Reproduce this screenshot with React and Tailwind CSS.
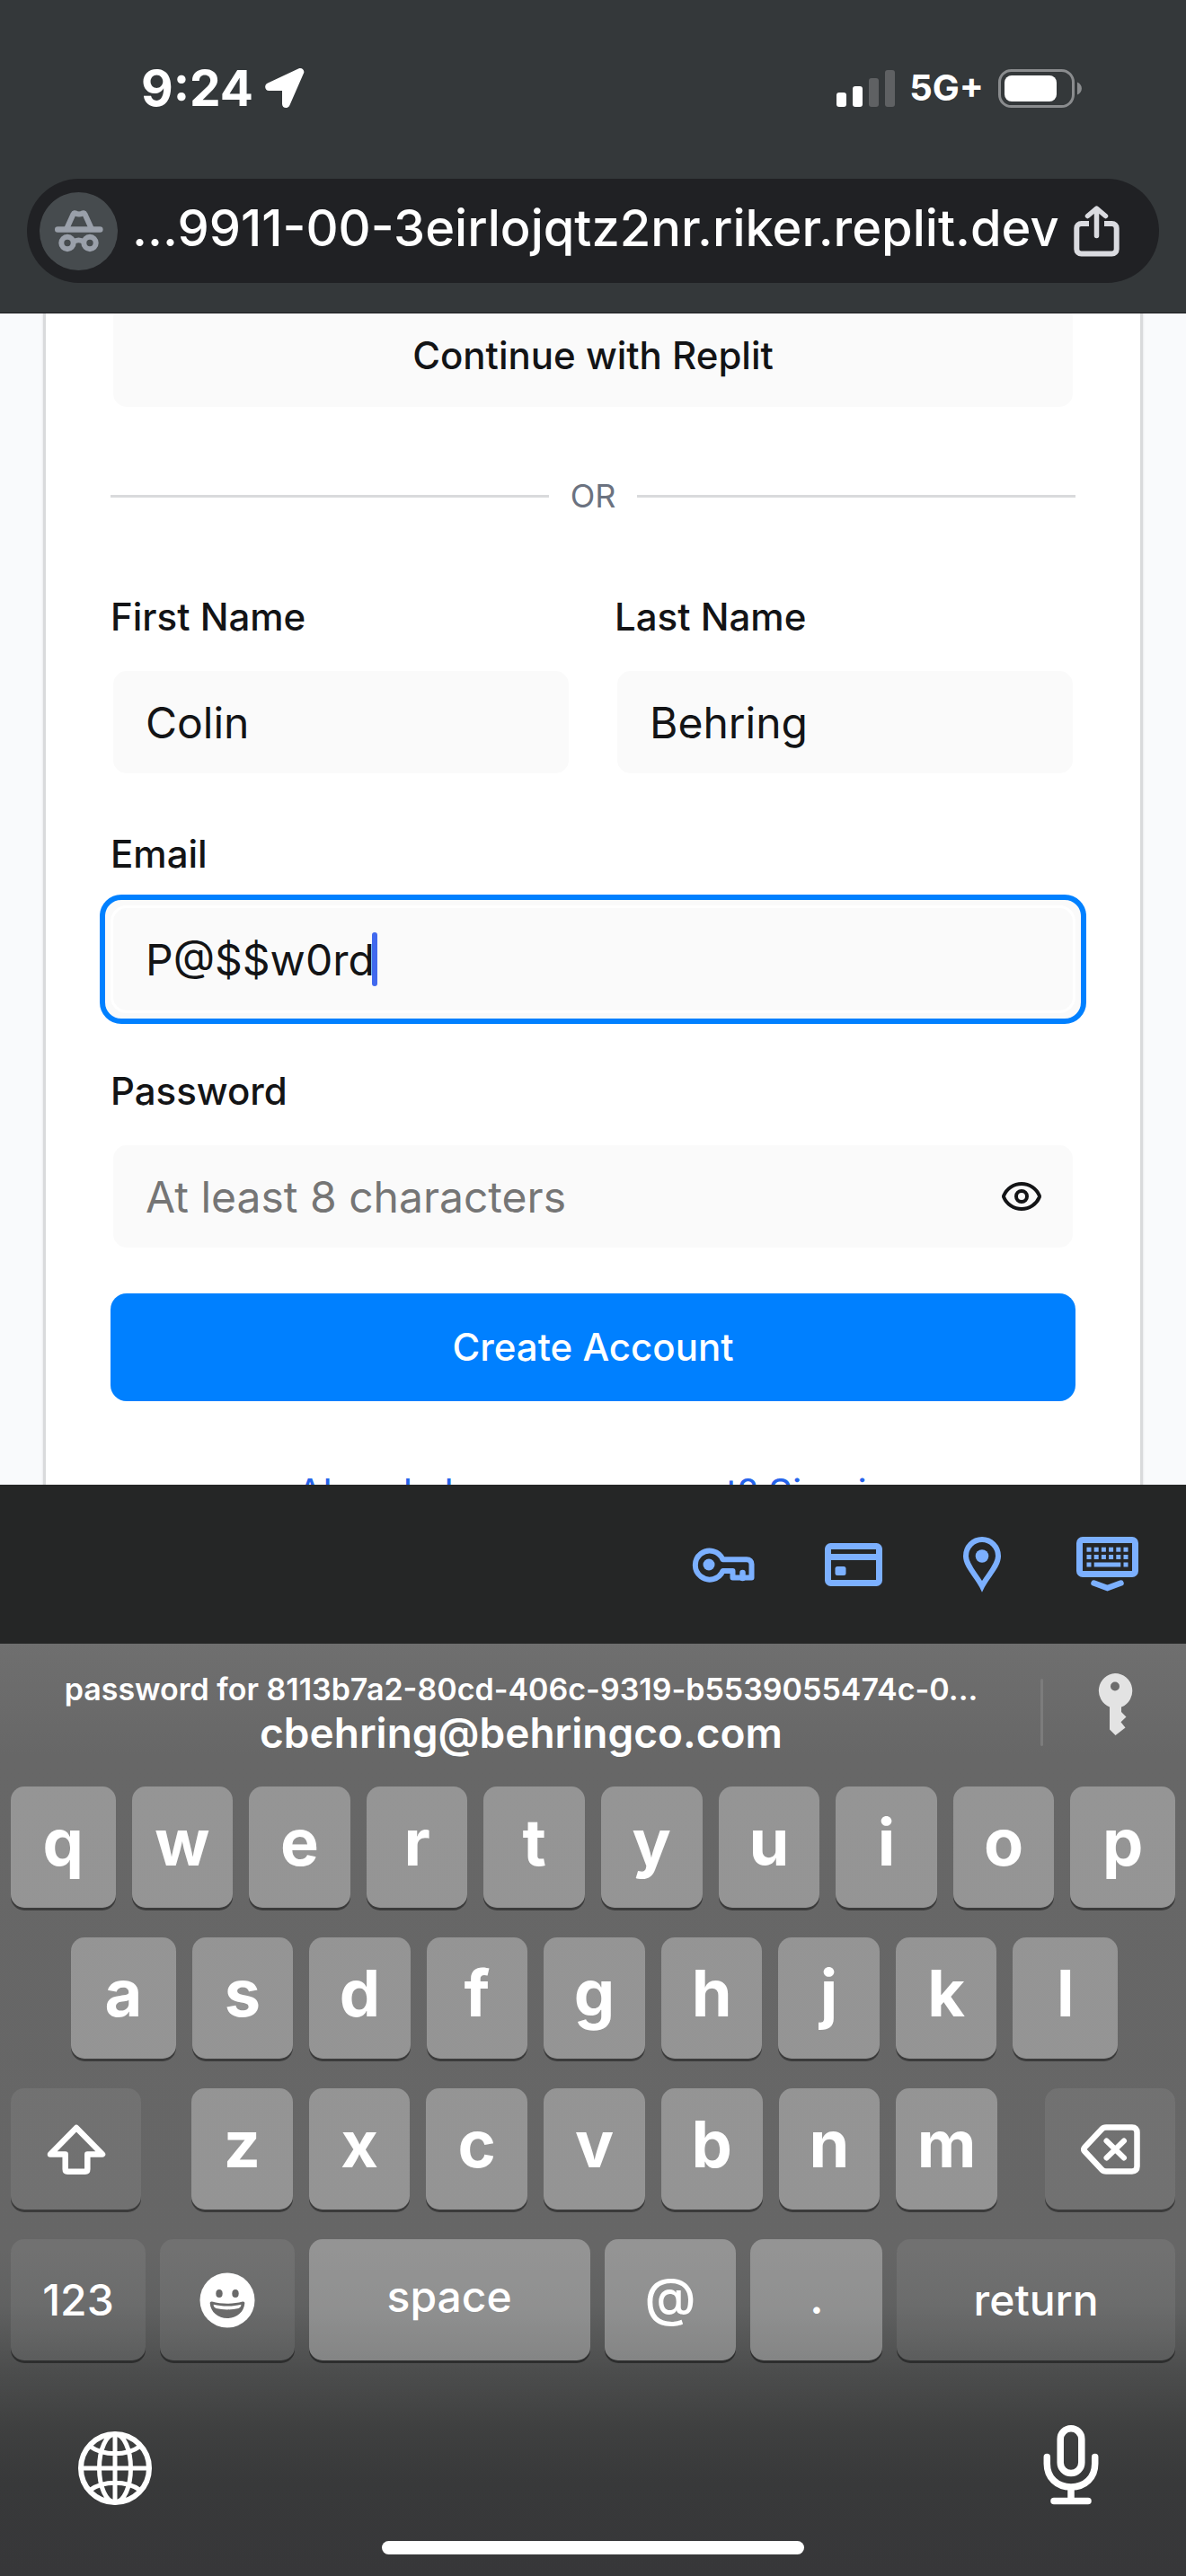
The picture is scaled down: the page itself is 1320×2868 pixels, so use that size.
import React from "react";
import { Eye } from "lucide-react";

const FONT = "font-['Inter','Liberation_Sans',sans-serif]";

function LocationArrow() {
  return (
    <svg className="h-[46px] w-[46px]" viewBox="0 0 46 46" fill="white" aria-hidden="true">
      <path d="M38.6 1.3c3.3-1.4 6.700 1.600 5.500 5L28.500 42c-1.900 4.700-8.500 3.900-8.500-1.200V26H5.500C.5 26-.4 19.300 4 17.400Z" />
    </svg>
  );
}

function SignalBars() {
  return (
    <svg className="h-[41px] w-[65px]" viewBox="0 0 65 41" aria-label="Signal">
      <rect x="0" y="25" width="11" height="16" rx="3" fill="white" />
      <rect x="18" y="18" width="11" height="23" rx="3" fill="white" />
      <rect x="36" y="9" width="11" height="32" rx="3" fill="#5f6163" />
      <rect x="54" y="0" width="11" height="41" rx="3" fill="#5f6163" />
    </svg>
  );
}

function Battery() {
  return (
    <svg className="h-[43px] w-[93px]" viewBox="0 0 93 43" aria-label="Battery">
      <rect x="1.500" y="1.500" width="82" height="40" rx="13" fill="none" stroke="#8a8c8e" strokeWidth="3" />
      <rect x="7" y="7" width="58" height="29" rx="8" fill="white" />
      <path d="M88 14.500v14c6.500-2.500 6.500-11.500 0-14Z" fill="#8a8c8e" />
    </svg>
  );
}

function IncognitoIcon() {
  return (
    <svg className="h-[47px] w-[54px]" viewBox="0 0 54 47" fill="none" stroke="#9aa0aa" aria-hidden="true">
      <path d="M13 21 20.500 4.500c.6-1.500 2-1.500 3.200-.8 2 1 4.600 1 6.600 0 1.200-.7 2.600-.7 3.200.8L41 21" strokeWidth="6" strokeLinejoin="round" />
      <path d="M3.300 21.500h47" strokeWidth="6.600" strokeLinecap="round" />
      <circle cx="14" cy="36.500" r="6.700" strokeWidth="6" />
      <circle cx="39" cy="36.500" r="6.700" strokeWidth="6" />
      <path d="M20 35.500c4-2.600 9-2.600 13 0" strokeWidth="5.500" />
    </svg>
  );
}

function ShareIcon() {
  return (
    <svg className="h-[57px] w-[51px]" viewBox="0 0 51 57" fill="none" stroke="#dadbe0" strokeWidth="6" aria-hidden="true">
      <path d="M17 20H8.500C5.500 20 3.300 22 3.300 25v23.500c0 3 2.200 5 5.200 5h34c3 0 5.200-2 5.200-5V25c0-3-2.200-5-5.200-5H34" />
      <path d="M25.500 33.500V4M15.500 11.500l10-8.500 10 8.500" strokeWidth="5.500" strokeLinecap="round" strokeLinejoin="round" />
    </svg>
  );
}

function KeyOutlineIcon() {
  return (
    <svg className="h-[40px] w-[70px]" viewBox="0 0 70 40" fill="none" stroke="#7cb0ff" aria-hidden="true">
      <path d="M34.500 14.200H61c3.500 0 5.500 2 5.500 5.300v15h-21v-7.500h-11A16 16 0 1 1 34.500 14.200Z" strokeWidth="6" strokeLinejoin="round" />
      <circle cx="19" cy="20" r="6.500" fill="#7cb0ff" stroke="none" />
      <path d="M56.500 35v-6" strokeWidth="6.500" strokeLinecap="round" />
    </svg>
  );
}

function CardIcon() {
  return (
    <svg className="h-[48px] w-[64px]" viewBox="0 0 64 48" fill="none" stroke="#7cb0ff" strokeWidth="7" aria-hidden="true">
      <rect x="3.500" y="3.500" width="57" height="41" rx="3" />
      <path d="M4 15.500h56" />
      <rect x="11.500" y="26" width="12" height="10" rx="2.500" fill="#7cb0ff" stroke="none" />
    </svg>
  );
}

function PinIcon() {
  return (
    <svg className="h-[62px] w-[42px]" viewBox="0 0 42 62" fill="none" stroke="#7cb0ff" strokeWidth="6" aria-hidden="true">
      <path d="M21 55C15 43 3 32.500 3 21.500a18 18.500 0 0 1 36 0C39 32.500 27 43 21 55Z" strokeLinejoin="miter" />
      <circle cx="21" cy="21.500" r="7.300" fill="#7cb0ff" stroke="none" />
    </svg>
  );
}

function HideKeyboardIcon() {
  const cols = [11.5, 19.7, 27.9, 36.1, 44.3, 52.5];
  return (
    <svg className="h-[61px] w-[69px]" viewBox="0 0 69 61" fill="#7cb0ff" aria-hidden="true">
      <rect x="3.500" y="3.500" width="62" height="38" rx="3.500" fill="none" stroke="#7cb0ff" strokeWidth="7" />
      {cols.map((x) => (
        <React.Fragment key={x}>
          <rect x={x} y="11.700" width="5" height="5" />
          <rect x={x} y="20" width="5" height="5" />
        </React.Fragment>
      ))}
      <rect x="11.500" y="28.500" width="5" height="5" />
      <rect x="19.700" y="28.500" width="29.600" height="5" />
      <rect x="52.500" y="28.500" width="5" height="5" />
      <path d="M19.500 51.500 34.500 57l15-5.500" fill="none" stroke="#7cb0ff" strokeWidth="6.500" strokeLinecap="round" />
    </svg>
  );
}

function KeyFilledIcon() {
  return (
    <svg className="h-[69px] w-[40px]" viewBox="0 0 40 69" fill="#e3e3e3" aria-hidden="true">
      <path fillRule="evenodd" d="M20 0a19.500 19.500 0 0 1 7 37.600V43l5.500 5.500-6 5.800 5 6.200L20.500 69 14 62.500v-25A19.500 19.500 0 0 1 20 0Zm0 9.500a5 5 0 1 0 0 10 5 5 0 0 0 0-10Z" />
    </svg>
  );
}

function ShiftIcon() {
  return (
    <svg className="h-[56px] w-[66px]" viewBox="0 0 66 56" fill="none" stroke="white" strokeWidth="6.500" strokeLinejoin="round" aria-hidden="true">
      <path d="M33 4 62 33.500H45.300V50c0 1.800-.8 2.700-2.500 2.700H23.200c-1.700 0-2.500-.9-2.500-2.700V33.500H4Z" />
    </svg>
  );
}

function BackspaceIcon() {
  return (
    <svg className="h-[56px] w-[66px]" viewBox="0 0 66 56" fill="none" stroke="white" strokeWidth="6.500" strokeLinecap="round" strokeLinejoin="round" aria-hidden="true">
      <path d="M28 3.500h29c3.600 0 5.500 2 5.500 5.500v38c0 3.500-1.900 5.500-5.500 5.500H28c-2 0-3.500-.6-5-2.200L4.500 30.500c-1.600-1.700-1.600-3.300 0-5L23 5.700c1.500-1.600 3-2.200 5-2.200Z" />
      <path d="m28.500 18.500 19.500 19M48 18.500l-19.500 19" strokeWidth="6" />
    </svg>
  );
}

function EmojiIcon() {
  return (
    <svg className="h-[62px] w-[62px]" viewBox="0 0 62 62" aria-hidden="true">
      <circle cx="31" cy="31" r="30.500" fill="white" />
      <ellipse cx="22" cy="23.500" rx="3.700" ry="4.500" fill="#6a6a6a" />
      <ellipse cx="40" cy="23.500" rx="3.700" ry="4.500" fill="#6a6a6a" />
      <path d="M14 32.500c11 3 23 3 34 0 1.500-.4 2.400.4 2.300 2C49.500 44 41.500 51 31 51S12.500 44 11.700 34.500c-.1-1.600.8-2.400 2.300-2Z" fill="#6a6a6a" />
      <path d="M15.700 35.800c10 2.400 20.600 2.400 30.600 0 .3 2-1 3.700-2.800 4.200-8 1.900-17 1.900-25 0-1.800-.5-3.100-2.200-2.800-4.200Z" fill="white" />
    </svg>
  );
}

function GlobeIcon() {
  return (
    <svg className="h-[82px] w-[82px]" viewBox="0 0 82 82" fill="none" stroke="white" strokeWidth="5" aria-hidden="true">
      <circle cx="41" cy="41" r="38" strokeWidth="6" />
      <ellipse cx="41" cy="41" rx="17.500" ry="38" />
      <path d="M41 3v76M3 41h76M13 16.500c15 11 41 11 56 0M13 65.500c15-11 41-11 56 0" />
    </svg>
  );
}

function MicIcon() {
  return (
    <svg className="h-[89px] w-[62px]" viewBox="0 0 62 89" fill="none" stroke="white" strokeWidth="7.500" strokeLinecap="round" aria-hidden="true">
      <rect x="19.200" y="3.800" width="23.600" height="49.700" rx="11.800" />
      <path d="M4.300 35.500v7.500c0 15.500 11 26 26.700 26s26.700-10.500 26.700-26v-7.500M31 69v15M12 84.500h38" />
    </svg>
  );
}

function Field({ id, label, type = "text", value, placeholder, active, children }) {
  return (
    <div className="flex min-w-0 flex-col gap-9">
      <label htmlFor={id} className="text-[42px] leading-none font-medium text-[#131416]">
        {label}
      </label>
      <div
        className={
          active
            ? "relative rounded-[12px] bg-[#fafafa] ring-6 ring-[#fafafa] outline-6 outline-offset-6 outline-[#0080ff]"
            : "relative"
        }
      >
        <input
          id={id}
          type={type}
          defaultValue={value}
          placeholder={placeholder}
          className="h-[120px] w-full rounded-[18px] border-3 border-white bg-[#fafafa] px-9 text-[48px] text-[#131416] outline-none placeholder:text-[#757575]"
        />
        {children}
      </div>
    </div>
  );
}

const KEY = "flex h-[135px] min-w-0 items-center justify-center rounded-[15px] text-white shadow-[0_3px_0_rgba(0,0,0,0.42)]";

function LetterKey({ letter, wide }) {
  return (
    <button className={`${KEY} bg-white/30 pb-3 text-[72px] leading-none font-bold ${wide ? "flex-[29]" : "flex-[28]"}`}>
      {letter}
    </button>
  );
}

function LetterRow({ letters, wideEnds }) {
  const last = letters.length - 1;
  return letters
    .split("")
    .map((l, i) => <LetterKey key={l} letter={l} wide={wideEnds && (i === 0 || i === last)} />);
}

export default function App() {
  return (
    <div className={`flex h-screen flex-col overflow-hidden bg-[#f9fafc] ${FONT}`}>
      <header className="border-b border-[#1c1d20] bg-[#34383a] px-[30px] pt-[66px] pb-[33px]">
        <div className="mb-[69px] flex h-16 items-center justify-between pr-[86px] pl-[127px]">
          <div className="flex items-center gap-3 text-[55px] leading-none font-bold text-white">
            <time>9:24</time>
            <LocationArrow />
          </div>
          <div className="flex items-center gap-4 text-[40px] leading-none font-bold text-white">
            <SignalBars />
            <span>5G+</span>
            <Battery />
          </div>
        </div>
        <div className="flex h-[116px] items-center rounded-full bg-[#202124] pr-11 pl-[14px]">
          <button aria-label="Incognito" className="flex size-[87px] shrink-0 items-center justify-center rounded-full bg-[#464b4e]">
            <IncognitoIcon />
          </button>
          <input
            aria-label="Address"
            readOnly
            defaultValue="...9911-00-3eirlojqtz2nr.riker.replit.dev"
            className="ml-4 min-w-0 flex-1 bg-transparent pb-1.5 text-[56px] font-medium text-white outline-none"
          />
          <button aria-label="Share" className="shrink-0">
            <ShareIcon />
          </button>
        </div>
      </header>

      <main className="min-h-0 flex-1 overflow-hidden px-12">
        <form className="-mt-[88px] rounded-[24px] border-3 border-[#d9dadc] bg-white p-[72px] shadow-sm">
          <button type="button" className="h-[120px] w-full rounded-[18px] border-3 border-white bg-[#fafafa] pb-0.5 text-[42px] font-medium text-[#131416]">
            Continue with Replit
          </button>
          <div className="mt-[72px] flex items-center gap-6">
            <div className="h-[3px] flex-1 bg-[#d9dadc]" />
            <span className="text-[36px] leading-[48px] text-[#6b7280]">OR</span>
            <div className="h-[3px] flex-1 bg-[#d9dadc]" />
          </div>
          <div className="mt-[90px] flex flex-col gap-[66px]">
            <div className="grid grid-cols-2 gap-12">
              <Field id="first" label="First Name" value="Colin" />
              <Field id="last" label="Last Name" value="Behring" />
            </div>
            <Field id="email" label="Email" value="P@$$w0rd" active>
              <span className="absolute top-[30px] left-[291px] h-[60px] w-[6px] rounded-full bg-[#4169ee]" />
            </Field>
            <Field id="password" label="Password" type="password" placeholder="At least 8 characters">
              <button type="button" aria-label="Show password" className="absolute inset-y-0 right-9 flex items-center text-[#131416]">
                <Eye size={48} strokeWidth={2} />
              </button>
            </Field>
          </div>
          <button type="submit" className="mt-12 h-[120px] w-full rounded-[18px] bg-[#0080ff] pb-0.5 text-[42px] font-medium text-white">
            Create Account
          </button>
          <div className="mt-[72px] text-center text-[42px] leading-[60px] text-[#2563eb]">
            <a href="#signin">Already have an account? Sign in</a>
          </div>
        </form>
      </main>

      <nav aria-label="Autofill" className="flex h-[177px] shrink-0 items-center justify-end gap-[78px] bg-[#252626] pr-[53px]">
        <button aria-label="Passwords"><KeyOutlineIcon /></button>
        <button aria-label="Payment methods"><CardIcon /></button>
        <button aria-label="Addresses" className="mr-1.5 ml-3"><PinIcon /></button>
        <button aria-label="Hide keyboard"><HideKeyboardIcon /></button>
      </nav>

      <section
        aria-label="Keyboard"
        className="shrink-0 bg-[linear-gradient(#6f6f6f_0%,#676767_12%,#666666_65%,#606161_71%,#4c4d4d_78%,#3f4040_84%,#38393a_90%,#373739_100%)] px-3"
      >
        <div className="flex h-[159px] items-start pt-[30px]">
          <button className="flex min-w-0 flex-1 flex-col items-center pr-2.5 text-white">
            <span className="text-[34px] leading-[42px] font-semibold">password for 8113b7a2-80cd-406c-9319-b5539055474c-0...</span>
            <span className="text-[46px] leading-[54px] font-semibold">cbehring@behringco.com</span>
          </button>
          <div className="mt-[9px] h-[75px] w-[3px] rounded-full bg-[#7c7c7c]" />
          <button aria-label="Password manager" className="mt-[3px] mr-[47px] ml-[60px]">
            <KeyFilledIcon />
          </button>
        </div>

        <div className="flex flex-col gap-[33px]">
          <div className="flex gap-[18px]">
            <LetterRow letters="qwertyuiop" wideEnds />
          </div>
          <div className="flex gap-[18px] pr-16 pl-[67px]">
            <LetterRow letters="asdfghjkl" wideEnds />
          </div>
          <div className="flex">
            <button aria-label="Shift" className={`${KEY} w-[145px] bg-white/7`}>
              <ShiftIcon />
            </button>
            <div className="mr-[53px] ml-[56px] flex min-w-0 flex-1 gap-[18px]">
              <LetterRow letters="zxcvbnm" />
            </div>
            <button aria-label="Delete" className={`${KEY} w-[145px] bg-white/7`}>
              <BackspaceIcon />
            </button>
          </div>
          <div className="flex gap-4 text-[48px] leading-none font-medium">
            <button className={`${KEY} flex-[150] bg-white/7`}>123</button>
            <button aria-label="Emoji" className={`${KEY} flex-[150] bg-white/7`}>
              <EmojiIcon />
            </button>
            <button className={`${KEY} flex-[313] bg-white/30 pb-2`}>space</button>
            <button className={`${KEY} flex-[147] bg-white/30 pb-2 text-[58px]`}>@</button>
            <button className={`${KEY} flex-[147] bg-white/30 pb-1 font-semibold`}>.</button>
            <button className={`${KEY} flex-[310] bg-white/7`}>return</button>
          </div>
        </div>

        <div className="flex items-end justify-between pt-[72px] pr-[85px] pl-[75px]">
          <button aria-label="Next keyboard"><GlobeIcon /></button>
          <button aria-label="Dictate"><MicIcon /></button>
        </div>
        <div className="mx-auto mt-10 mb-6 h-[15px] w-[470px] rounded-full bg-white" />
      </section>
    </div>
  );
}
